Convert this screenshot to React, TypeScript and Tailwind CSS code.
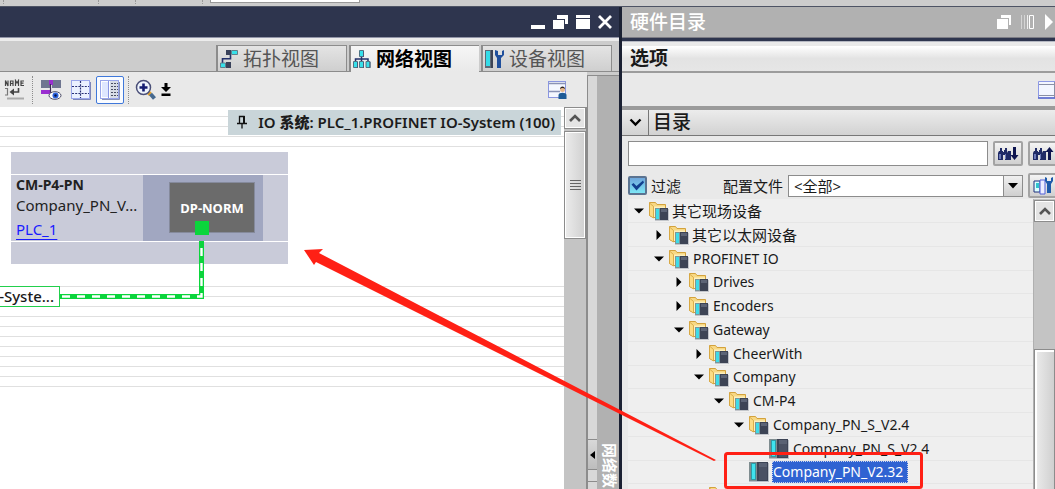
import React from "react";

type NodeKind = "open" | "closed" | "device";

type TreeNode = {
  label: string;
  level: number;
  kind: NodeKind;
  selected?: boolean;
  cjk?: boolean;
};

const TREE: TreeNode[] = [
  { label: "其它现场设备", level: 0, kind: "open", cjk: true },
  { label: "其它以太网设备", level: 1, kind: "closed", cjk: true },
  { label: "PROFINET IO", level: 1, kind: "open" },
  { label: "Drives", level: 2, kind: "closed" },
  { label: "Encoders", level: 2, kind: "closed" },
  { label: "Gateway", level: 2, kind: "open" },
  { label: "CheerWith", level: 3, kind: "closed" },
  { label: "Company", level: 3, kind: "open" },
  { label: "CM-P4", level: 4, kind: "open" },
  { label: "Company_PN_S_V2.4", level: 5, kind: "open" },
  { label: "Company_PN_S_V2.4", level: 6, kind: "device" },
  { label: "Company_PN_V2.32", level: 5, kind: "device", selected: true },
  { label: "", level: 3, kind: "closed" },
];

function DeviceIcon() {
  return (
    <svg width="20" height="20" viewBox="0 0 20 20" className="shrink-0" aria-hidden="true">
      <rect x="0" y="0" width="8" height="19" fill="#7f8d90" />
      <rect x="2" y="1" width="5" height="17" fill="#2f9aa5" />
      <rect x="3" y="2" width="3" height="15" fill="#3fe3ee" />
      <rect x="8" y="0" width="11" height="19" fill="#3d4455" />
      <rect x="10" y="1" width="8" height="17" fill="#4a5163" />
      <rect x="10" y="1" width="8" height="4" fill="#5a6274" />
      <path d="M0 19.5H20M19.5 1V20" stroke="#b9bec6" />
    </svg>
  );
}

function FolderIcon() {
  return (
    <svg width="20" height="20" viewBox="0 0 20 20" className="shrink-0" aria-hidden="true">
      <path d="M.5 1.500H6.500L8 3.500H16.500V16.500H4.500L.5 14.500Z" fill="#f7d884" stroke="#d3a23c" />
      <path d="M5 5.500H16V16H5Z" fill="#fdf0bd" />
      <path d="M.5 2 4.500 5.500V17L.5 14.500Z" fill="#fbdc85" stroke="#d3a23c" strokeWidth=".8" />
      <rect x="6" y="7" width="5" height="12" fill="#7d9699" />
      <rect x="7" y="8" width="3" height="10" fill="#3fdbe8" />
      <rect x="11" y="7" width="8" height="12" fill="#3d4455" />
      <rect x="12" y="8" width="6" height="3" fill="#5c6476" />
      <path d="M6 19.500H20M19.500 8V20" stroke="#c3c6cb" />
    </svg>
  );
}

function Expander({ kind }: { kind: NodeKind }) {
  if (kind === "device") return <span className="w-[21px] shrink-0" />;
  return (
    <button type="button" aria-label={kind === "open" ? "Collapse" : "Expand"} className="flex w-[21px] shrink-0 justify-center">
      <svg width="12" height="12" viewBox="0 0 12 12" aria-hidden="true">
        <path d={kind === "open" ? "M1 3.500H11L6 8.500Z" : "M3.500 1V11L8.500 6Z"} fill="#000" />
      </svg>
    </button>
  );
}

const INDENT = ["pl-0", "pl-5", "pl-10", "pl-15", "pl-20", "pl-25", "pl-30"];

function TreeRow({ node }: { node: TreeNode }) {
  return (
    <li className="h-6 shrink-0 border-b border-[#e6e6e6] nth-[4n]:h-[23px]">
      <div className={`flex h-full items-center ${INDENT[node.level]}`}>
        <Expander kind={node.kind} />
        {node.kind === "device" ? <DeviceIcon /> : <FolderIcon />}
        <span
          className={
            node.selected
              ? "ml-[3px] border border-dotted border-[#c9d4ee] bg-[#2f63d2] pr-1 leading-5 whitespace-nowrap text-white"
              : node.cjk
                ? "ml-[3px] text-[15px] leading-5 whitespace-nowrap"
                : "ml-[3px] pl-px leading-5 whitespace-nowrap"
          }
        >
          {node.label}
        </span>
      </div>
    </li>
  );
}

function TopologyIcon() {
  return (
    <svg width="20" height="20" viewBox="0 0 20 20" aria-hidden="true">
      <path d="M3.500 14V9.800H11.500V6" fill="none" stroke="#23306a" strokeWidth="1.600" />
      <path d="M7 1h5v5H7zM7 13h5v6H7z" fill="#39415a" />
      <path d="M12.500 1.500h6v4h-6z" fill="#36e0ea" stroke="#5f7f8c" />
      <path d="M1.500 14h5v4.500h-5z" fill="#36e0ea" stroke="#5f7f8c" />
    </svg>
  );
}

function NetworkIcon() {
  return (
    <svg width="20" height="20" viewBox="0 0 20 20" aria-hidden="true">
      <path d="M9.500 7V10M3.500 13V10H16V13M9.500 10V13" fill="none" stroke="#23306a" strokeWidth="1.500" />
      <g fill="#36e0ea" stroke="#4f7484">
        <path d="M7.500 1.500h4v6h-4zM1.500 12.500h4v6h-4zM7.500 12.500h4v6h-4zM14 12.500h4v6h-4z" />
      </g>
      <path d="M11 2h1v6h-1zM5 13h1v6H5zM11 13h1v6h-1zM17.500 13h1v6h-1z" fill="#4a5d7a" />
    </svg>
  );
}

function DeviceViewIcon() {
  return (
    <svg width="21" height="20" viewBox="0 0 21 20" aria-hidden="true">
      <path d="M1 1h8v18H1z" fill="#5e6a77" />
      <path d="M2 2h4v15H2z" fill="#34dce8" />
      <path d="M7 1h2v18H7z" fill="#3d4455" />
      <path d="M11 1v5l2 3v10h4V9l3-3V1l-2 1v4h-4V2z" fill="#1f4f9c" />
    </svg>
  );
}

type ViewTab = { label: string; icon: React.ReactNode; active?: boolean };

const TABS: ViewTab[] = [
  { label: "拓扑视图", icon: <TopologyIcon /> },
  { label: "网络视图", icon: <NetworkIcon />, active: true },
  { label: "设备视图", icon: <DeviceViewIcon /> },
];

function ViewTabs() {
  return (
    <div role="tablist" className="flex h-[31px] shrink-0 items-end justify-end gap-0.5 bg-[#cccccc] pr-[7px] shadow-[inset_0_-1px_0_#8c8c8c]">
      {TABS.map((tab) => (
        <button
          key={tab.label}
          type="button"
          role="tab"
          aria-selected={!!tab.active}
          className={
            tab.active
              ? "flex h-[27px] w-[130px] items-center gap-1 border-t border-l-2 border-[#8c8c8c] bg-linear-to-b from-[#f6f6f6] to-[#e9e9e9] pl-px text-[19px] leading-6 font-bold text-black"
              : "flex h-[27px] w-[131px] items-center gap-1 border border-l-2 border-[#8c8c8c] bg-linear-to-b from-[#e4e4e4] to-[#cfcfcf] pl-px text-[19px] leading-6 text-[#555]"
          }
        >
          {tab.icon}
          <span className="whitespace-nowrap">{tab.label}</span>
        </button>
      ))}
    </div>
  );
}

function WindowButtons() {
  return (
    <div className="flex items-center gap-[7px]">
      <button type="button" aria-label="Minimize">
        <svg width="16" height="16" viewBox="0 0 16 16"><path d="M1 11h14v4H1z" fill="#fff" /></svg>
      </button>
      <button type="button" aria-label="Float">
        <svg width="15" height="16" viewBox="0 0 15 16">
          <path d="M0 6h11v9H0z" fill="#fff" />
          <path d="M4 1h11v9h-3V5H4z" fill="#fff" />
        </svg>
      </button>
      <button type="button" aria-label="Maximize">
        <svg width="16" height="16" viewBox="0 0 16 16">
          <path d="M1 1h14v3H1zM1 5h14v10H1z" fill="#fff" />
        </svg>
      </button>
      <button type="button" aria-label="Close">
        <svg width="14" height="16" viewBox="0 0 14 16">
          <path d="M1 2 13 14M13 2 1 14" stroke="#fff" strokeWidth="2.800" />
        </svg>
      </button>
    </div>
  );
}

function NameIcon() {
  return (
    <svg width="22" height="22" viewBox="0 0 22 22" aria-hidden="true">
      <g fill="none" stroke="#444" strokeWidth="1.200">
        <path d="M1.500 7V1.500L4 7V1.500M6.500 7V2H9V7M6.500 4.500H9M11.500 7V1.500L13 4l1.500-2.500V7M20 2h-3V6.500h3M17 4.200h2.500" />
        <path d="M1 9.500h2.500V16H1" stroke="#777" />
        <path d="M14.500 9V13H7" strokeWidth="1.600" />
      </g>
      <path d="M5.500 13 10 9.500v7z" fill="#444" />
      <path d="M3 18.500h17v2H3z" fill="#aaa" />
    </svg>
  );
}

function ShowAddressIcon() {
  return (
    <svg width="22" height="22" viewBox="0 0 22 22" aria-hidden="true">
      <path d="M1 1h9v8H1zM12 1h9v8h-9z" fill="#6f7690" />
      <path d="M9 1h4v5H9zM1 11h10v4H1z" fill="#9a2fd0" />
      <path d="M10.500 5V14" stroke="#3c2a56" strokeWidth="1.200" />
      <ellipse cx="15" cy="16.500" rx="6" ry="3.800" fill="#fff" stroke="#4b4b66" />
      <circle cx="15.500" cy="16.500" r="3" fill="#2b63e0" />
      <circle cx="15.500" cy="16.500" r="1.200" fill="#0b1440" />
    </svg>
  );
}

function PageBreakIcon() {
  return (
    <svg width="22" height="22" viewBox="0 0 22 22" aria-hidden="true">
      <rect x="1.500" y="1.500" width="18" height="18" fill="#eaf0ff" stroke="#9aa6ea" />
      <path d="M10.500 2V19M2 7.500H19M2 14.500H19" stroke="#273075" strokeWidth="1.200" strokeDasharray="2 1.200" />
      <path d="M3 20.500H20.500V3" fill="none" stroke="#7d86b8" />
    </svg>
  );
}

function TableViewIcon() {
  return (
    <svg width="22" height="22" viewBox="0 0 22 22" className="shrink-0" aria-hidden="true">
      <rect x="1.500" y="1.500" width="18" height="18" fill="#fff" stroke="#9aa6ea" />
      <path d="M3 3h6v15H3z" fill="#dfe7ff" />
      <path d="M9.500 2V19" stroke="#8996e4" />
      <path d="M11 2h8v17h-8z" fill="#d9dde6" />
      <path d="M12 4.500h7M12 7.500h7M12 10.500h7M12 13.500h7M12 16.500h7" stroke="#4b5064" strokeDasharray="2 1" />
      <path d="M3 20.500H20.500V3" fill="none" stroke="#8a91b4" />
    </svg>
  );
}

function ZoomIcon() {
  return (
    <svg width="22" height="22" viewBox="0 0 22 22" aria-hidden="true">
      <path d="m12.500 12.500 3 3" stroke="#e0a030" strokeWidth="4" />
      <path d="m15.500 15 4 4.500" stroke="#46698f" strokeWidth="4" />
      <circle cx="8.500" cy="8.500" r="7" fill="#eef3fb" stroke="#4a4f78" strokeWidth="1.500" />
      <path d="M8.500 4.500v8M4.500 8.500h8" stroke="#141c70" strokeWidth="2.600" />
    </svg>
  );
}

function ToolSeparator() {
  return <span className="h-7 w-0 border-l border-dotted border-[#8c8c8c]" />;
}

function CanvasToolbar() {
  return (
    <div className="flex h-[35px] shrink-0 items-center bg-[#e9e9e9] pr-[19px] pl-1">
      <button type="button" aria-label="Name device"><NameIcon /></button>
      <span className="w-1.5" />
      <ToolSeparator />
      <div className="flex items-center gap-2 pl-[7px]">
        <button type="button" aria-label="Show addresses"><ShowAddressIcon /></button>
        <button type="button" aria-label="Show page breaks"><PageBreakIcon /></button>
        <button
          type="button"
          aria-label="Table view"
          aria-pressed="true"
          className="-ml-1 flex h-7 w-7 items-center justify-center rounded-xs border border-[#3f78da] bg-[#fafcff]"
        >
          <TableViewIcon />
        </button>
      </div>
      <span className="w-1" />
      <ToolSeparator />
      <div className="flex items-center gap-[3px] pl-1.5">
        <button type="button" aria-label="Zoom in"><ZoomIcon /></button>
        <button type="button" aria-label="Zoom options">
          <svg width="12" height="16" viewBox="0 0 12 16">
            <path d="M4.500 1h3v4H11L6 10 1 5h3.500zM1.500 11.500h9V14h-9z" fill="#000" />
          </svg>
        </button>
      </div>
      <button type="button" aria-label="Save view" className="ml-auto">
        <svg width="20" height="20" viewBox="0 0 20 20">
          <rect x=".5" y="1.500" width="17" height="16" fill="#f4f7ff" stroke="#8a96e0" />
          <path d="M1 3.500h17M1 11.500h11" stroke="#8a93b5" strokeWidth="1.500" />
          <circle cx="14.500" cy="9.500" r="2.500" fill="#e8b98c" />
          <path d="M12 9c0-3.500 5-3.500 5 0-1.500-1.200-3.500-1.200-5 0" fill="#2c2320" />
          <path d="M10.500 19v-4c0-3 8-3 8 0v4z" fill="#1f5c96" />
        </svg>
      </button>
    </div>
  );
}

function GridBand({ rows }: { rows: number }) {
  return (
    <div>
      {Array.from({ length: rows }, (_, i) => (
        <div key={i} className="h-2.5 border-b border-[#e0e0e0]" />
      ))}
    </div>
  );
}

function DeviceNode() {
  return (
    <div className="absolute top-[45px] left-[11px] w-[277px] bg-[#c9cbd9]">
      <div className="h-[23px] border-b border-white" />
      <div className="flex h-[66px]">
        <div className="w-[132px] pl-[5px] text-[15px] whitespace-nowrap text-[#222]">
          <div className="h-5 text-sm leading-5 font-bold">CM-P4-PN</div>
          <div className="h-5 leading-5">Company_PN_V...</div>
          <a href="#plc" className="mt-1 inline-block leading-5 text-[#1a1aff] underline underline-offset-4">PLC_1</a>
        </div>
        <div className="flex w-[120px] bg-[#a1a7c1] pt-[7px] pl-[26px]">
          <div className="flex h-[51px] w-[86px] items-center justify-center border border-[#858a9c] bg-[#6b6b6b] text-[13px] leading-5 font-bold text-white">
            DP-NORM
          </div>
        </div>
      </div>
      <div className="h-[23px] border-t border-white" />
    </div>
  );
}

function Canvas() {
  return (
    <div className="relative min-w-0 flex-1 overflow-hidden bg-white">
      <GridBand rows={4} />
      <div className="h-[130px]" />
      <GridBand rows={11} />
      <DeviceNode />
      <svg className="absolute top-0 left-0" width="288" height="210" viewBox="0 0 288 210" aria-hidden="true">
        <path d="M60 189.500H201.500V134" fill="none" stroke="#0bd53c" strokeWidth="5" />
        <path d="M62 189.500H201.500V134" fill="none" stroke="#fff" strokeWidth="2.400" strokeDasharray="8 7" />
        <path d="M195 114h14v14h-14z" fill="#0bd53c" />
      </svg>
      <div className="absolute top-[179px] left-0 flex h-[21px] w-[60px] justify-end border border-l-0 border-[#22cf4c] bg-white pr-[5px] text-[15px] leading-[18px] font-medium whitespace-nowrap">
        -Syste...
      </div>
      <div className="absolute top-[3px] right-[3px] flex h-[25px] items-center gap-2.5 bg-[#c9d5d9] pr-1.5 pb-0.5 pl-2 text-[15px] leading-5 font-semibold whitespace-nowrap text-[#1c1c1c]">
        <svg width="12" height="14" viewBox="0 0 12 14" aria-hidden="true">
          <path d="M3.500 1.500H8V8.500H3.500zM1 8.500H11M6 9V13.500" fill="none" stroke="#111" strokeWidth="1.300" />
          <path d="M7 1h2v8H7z" fill="#111" />
        </svg>
        <span>IO <b>系统</b>: PLC_1.PROFINET IO-System (100)</span>
      </div>
    </div>
  );
}

function ScrollUp() {
  return (
    <button type="button" aria-label="Scroll up" className="flex h-[22px] w-full shrink-0 items-center justify-center border border-[#8c8c8c] bg-[#e4e4e4] shadow-[inset_0_0_0_1px_#fff]">
      <svg width="14" height="10" viewBox="0 0 14 10" aria-hidden="true">
        <path d="M2 8 7 3l5 5" fill="none" stroke="#555" strokeWidth="2.600" />
      </svg>
    </button>
  );
}

function NetworkEditor() {
  return (
    <section className="flex min-w-0 flex-1 flex-col">
      <header className="flex h-[31px] shrink-0 items-center justify-end border-b border-[#9295a8] bg-[#2e354e] pr-[7px]">
        <WindowButtons />
      </header>
      <div className="h-[3px] shrink-0 bg-[#ececec]" />
      <ViewTabs />
      <div className="flex min-h-0 flex-1">
        <div className="flex min-w-0 flex-1 flex-col">
          <CanvasToolbar />
          <div className="flex min-h-0 flex-1">
            <Canvas />
            <div className="flex w-[23px] flex-col border-r border-[#8c8c8c] bg-[#c4c4c4]">
              <ScrollUp />
              <div className="mt-0.5 flex h-[108px] shrink-0 items-center justify-center border border-[#8c8c8c] bg-linear-to-r from-[#ececec] to-[#d0d0d0] shadow-[inset_0_0_0_1px_#fff]">
                <svg width="11" height="10" viewBox="0 0 11 10" aria-hidden="true">
                  <path d="M0 .5h11M0 3.500h11M0 6.500h11M0 9.500h11" stroke="#666" />
                </svg>
              </div>
            </div>
          </div>
        </div>
        <div className="flex w-8 pt-[3px]">
          <div className="flex w-2.5 flex-col justify-end border-t border-l border-[#8c8c8c] bg-[#d8d8d8]">
            <button type="button" aria-label="Expand table" className="flex h-[30px] items-center justify-center border-t border-[#8c8c8c] bg-linear-to-b from-[#d8d8d8] to-[#bdbdbd]">
              <svg width="5" height="8" viewBox="0 0 5 8"><path d="M5 0V8L0 4z" fill="#000" /></svg>
            </button>
            <div className="h-3 border-t border-[#8c8c8c]" />
            <div className="h-2 border-t border-[#8c8c8c]" />
          </div>
          <div className="flex flex-1 flex-col items-center overflow-hidden border-t border-[#8c8c8c] bg-[#b1b1b1] pt-[367px] pl-1">
            <span className="shrink-0 text-[15px] leading-5 font-bold whitespace-nowrap text-white [text-orientation:sideways] [writing-mode:vertical-rl]">
              网络数
            </span>
          </div>
        </div>
      </div>
    </section>
  );
}

function FindIcon({ up }: { up?: boolean }) {
  return (
    <svg width="22" height="16" viewBox="0 0 22 16" className="shrink-0" aria-hidden="true">
      <path d="M3 2h2v3h1v1h1V4h1V2h2v3l1 2v7H8V9H6v5H1V7l1-2h1z" fill="#1f2a66" />
      <path d="M2 8h2v5H2zM8 8h1v5H8z" fill="#6b79b8" />
      <path d="M11 5h3v9h-3z" fill="#1f2a66" />
      <path d={up ? "M16 14V6h-2.500L17.500 1 21.500 6H19v8z" : "M16 1v8h-2.500l4 5 4-5H19V1z"} fill="#0e1550" />
    </svg>
  );
}

const TOOL_BUTTON =
  "flex h-[25px] w-[30px] shrink-0 items-center justify-center rounded-xs border-2 border-[#a3a3a3] bg-linear-to-b from-[#f4f4f4] to-[#d0d0d0]";

function HardwareCatalog() {
  return (
    <aside className="flex w-[433px] shrink-0 flex-col overflow-hidden bg-[#e9e9e9]">
      <header className="flex h-[31px] shrink-0 items-center justify-between border-b border-[#7c7c84] bg-[#b1b1b1] pl-2 text-white">
        <h1 className="text-[19px] leading-6 font-medium">硬件目录</h1>
        <div className="flex items-center gap-2">
          <button type="button" aria-label="Float">
            <svg width="15" height="16" viewBox="0 0 15 16">
              <path d="M0 5h11v10H0z" fill="#fff" />
              <path d="M4 1h10v10h-2V4H4z" fill="#fff" />
            </svg>
          </button>
          <button type="button" aria-label="Auto hide">
            <svg width="15" height="16" viewBox="0 0 15 16">
              <path d="M1 1h1v14H1zM4 1h1v14H4z" fill="#d4d4d4" />
              <path d="M7 1h1v14H7z" fill="#eee" />
              <path d="M9.500 1.500h4v13h-4z" fill="none" stroke="#fff" />
            </svg>
          </button>
          <button type="button" aria-label="Collapse panel">
            <svg width="12" height="16" viewBox="0 0 12 16"><path d="M2 0v16l8-8z" fill="#fff" /></svg>
          </button>
        </div>
      </header>
      <div className="h-1 shrink-0 border-b border-[#b5b8c2] bg-[#2e354e]" />
      <h2 className="mt-1 flex h-[27px] shrink-0 items-center border-b-2 border-[#9c9c9c] bg-linear-to-b from-white via-[#e3e3e3] to-[#e6e6e6] pb-0.5 pl-2 text-[19px] leading-6 font-bold">
        选项
      </h2>
      <div className="flex h-[33px] shrink-0 items-center justify-end">
        <svg width="17" height="20" viewBox="0 0 17 20" aria-hidden="true">
          <path d="M.5 1.500H20V18H.5z" fill="#f3f6ff" stroke="#8d99e6" />
          <path d="M1 4.500H17M1 15.500H17M16.500 2V18" stroke="#8a8fa5" />
          <path d="M0 18H17" stroke="#5666cc" strokeWidth="1.500" />
        </svg>
      </div>
      <div className="flex h-[30px] shrink-0 items-stretch border-t-4 border-b border-t-[#9b9b9b] border-b-[#777] bg-linear-to-b from-[#ececec] to-[#d2d2d2]">
        <button type="button" aria-label="Collapse catalog" className="flex w-[27px] items-center justify-center border-r border-[#777]">
          <svg width="13" height="9" viewBox="0 0 13 9"><path d="M1.500 1.500 6.500 6.500l5-5" fill="none" stroke="#000" strokeWidth="2.400" /></svg>
        </button>
        <h2 className="pl-1 text-[19px] leading-6 font-medium">目录</h2>
      </div>
      <div className="-mr-[3px] flex shrink-0 gap-[5px] pt-[5px] pl-1.5">
        <input type="text" aria-label="Search catalog" className="h-[25px] min-w-0 flex-1 border border-[#8c8c8c] bg-white px-1" />
        <button type="button" aria-label="Find next" className={TOOL_BUTTON}><FindIcon /></button>
        <button type="button" aria-label="Find previous" className={TOOL_BUTTON}><FindIcon up /></button>
      </div>
      <div className="mt-[7px] -mr-[3px] flex h-[25px] shrink-0 items-center pl-1.5 text-[15px] leading-5">
        <label className="flex items-center gap-1">
          <span className="relative flex h-[19px] w-[19px]">
            <input
              type="checkbox"
              defaultChecked
              className="h-[19px] w-[19px] appearance-none rounded-xs border-2 border-[#5b7391] bg-linear-to-b from-[#6fa6dc] to-[#7de6f5]"
            />
            <svg className="pointer-events-none absolute inset-0" width="19" height="19" viewBox="0 0 19 19" aria-hidden="true">
              <path d="m3.500 8.500 2-1.500 3 3L15 4.500l1 2L8.500 14.500Z" fill="#12408f" />
            </svg>
          </span>
          <span className="whitespace-nowrap">过滤</span>
        </label>
        <label htmlFor="profile" className="ml-[42px] whitespace-nowrap">配置文件</label>
        <div className="relative ml-[5px] flex h-[22px] min-w-0 flex-1">
          <select id="profile" className="h-full w-full appearance-none border border-[#8c8c8c] bg-white pl-[5px] text-[15px] leading-5">
            <option>{"<全部>"}</option>
          </select>
          <span className="pointer-events-none absolute inset-y-0 right-0 flex w-5 items-center justify-center border border-[#8c8c8c] bg-linear-to-b from-[#f0f0f0] to-[#cfcfcf]">
            <svg width="10" height="6" viewBox="0 0 10 6" aria-hidden="true"><path d="M0 0H10L5 5.500z" fill="#000" /></svg>
          </span>
        </div>
        <button type="button" aria-label="Catalog settings" className={`ml-[5px] ${TOOL_BUTTON}`}>
          <svg width="22" height="20" viewBox="0 0 22 20" aria-hidden="true">
            <path d="M2 5h6v11H2z" fill="#dff" stroke="#1f2f7a" />
            <path d="M4 7h3v5H4z" fill="#31c4cf" />
            <path d="M8 4h5v14H8z" fill="#eef" stroke="#5161d8" />
            <path d="M13 1v4l2 3v9h4V8l2-3V1l-2 1v3h-4V2z" fill="#1f5bab" />
          </svg>
        </button>
      </div>
      <div className="mt-px flex min-h-0 flex-1 pl-1.5">
        <ul className="flex min-w-0 flex-1 flex-col overflow-hidden bg-[#efefef] text-sm">
          {TREE.map((node, i) => (
            <TreeRow key={i} node={node} />
          ))}
        </ul>
        <div className="flex w-[22px] flex-col border-l border-[#b0b0b0] bg-[#c4c4c4] pt-px">
          <ScrollUp />
          <div className="mt-[127px] flex-1 border border-b-0 border-[#8c8c8c] bg-linear-to-r from-[#ececec] to-[#d0d0d0] shadow-[inset_1px_1px_0_1px_#fff]" />
        </div>
      </div>
    </aside>
  );
}

export default function App() {
  return (
    <div className="relative flex h-screen flex-col overflow-hidden bg-[#cccccc] font-['Noto_Sans','Noto_Sans_CJK_SC',sans-serif] text-[#1a1a1a]">
      <div className="flex h-1.5 shrink-0 items-start">
        <div className="ml-[3px] h-1 w-24 border-x border-dotted border-[#999]" />
        <div className="h-1 w-[37px] border-r border-dotted border-[#999]" />
        <div className="h-1 w-[67px] border-r border-dotted border-[#999]" />
        <div className="ml-[7px] h-[3px] w-[150px] border border-t-0 border-[#999] bg-white" />
      </div>
      <main className="flex min-h-0 flex-1 border-t border-[#4d5364]">
        <NetworkEditor />
        <div className="w-[3px] shrink-0 bg-[#1b2133]" />
        <HardwareCatalog />
      </main>
      <svg className="pointer-events-none absolute top-0 right-0" width="755" height="489" viewBox="300 0 755 489" aria-hidden="true">
        <path d="M304 250 323 249 319 253 716 460 714 461 316 262 314 265Z" fill="#ff2015" />
        <rect x="725.500" y="453.500" width="196" height="34" rx="2" fill="none" stroke="#ff2015" strokeWidth="3" />
      </svg>
    </div>
  );
}
